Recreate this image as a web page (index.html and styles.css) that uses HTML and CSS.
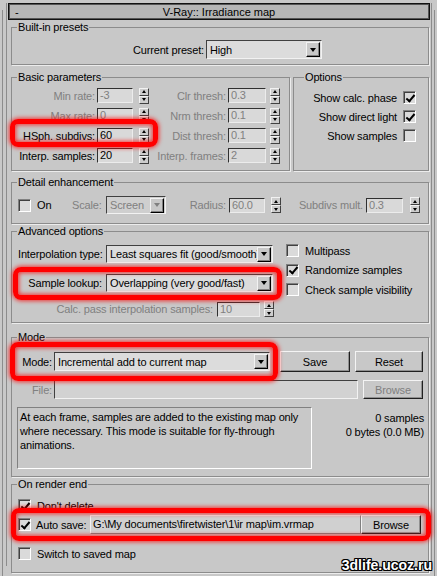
FILE: index.html
```html
<!DOCTYPE html>
<html lang="en">
<head>
    <meta charset="UTF-8">
    <meta name="viewport" content="width=device-width, initial-scale=1.0">
    <title>V-Ray:: Irradiance map</title>
    <link rel="stylesheet" href="styles.css">
</head>
<body>
<div class="rollout">
  <div class="inner">
    <div class="title"><span class="minus">-</span><span class="caption">V-Ray:: Irradiance map</span><span></span></div>

    <fieldset class="g presets">
      <legend>Built-in presets</legend>
      <div class="row">
        <span class="lbl preset-lbl">Current preset:</span>
        <div class="sel preset-sel"><span class="v">High</span><span class="arr"></span></div>
      </div>
    </fieldset>

    <div class="split">
      <fieldset class="g basic">
        <legend>Basic parameters</legend>
        <div class="prow">
          <span class="lbl l1 dis">Min rate:</span><span class="num n1 dis">-3</span><span class="spin s1"><i></i><i></i></span>
          <span class="lbl l2 dis">Clr thresh:</span><span class="num n2 dis">0.3</span><span class="spin s2"><i></i><i></i></span>
        </div>
        <div class="prow">
          <span class="lbl l1 dis">Max rate:</span><span class="num n1 dis">0</span><span class="spin s1"><i></i><i></i></span>
          <span class="lbl l2 dis">Nrm thresh:</span><span class="num n2 dis">0.1</span><span class="spin s2"><i></i><i></i></span>
        </div>
        <div class="prow">
          <span class="lbl l1">HSph. subdivs:</span><span class="num n1">60</span><span class="spin s1"><i></i><i></i></span>
          <span class="lbl l2 dis">Dist thresh:</span><span class="num n2 dis">0.1</span><span class="spin s2"><i></i><i></i></span>
        </div>
        <div class="prow">
          <span class="lbl l1">Interp. samples:</span><span class="num n1">20</span><span class="spin s1"><i></i><i></i></span>
          <span class="lbl l2 dis">Interp. frames:</span><span class="num n2 dis">2</span><span class="spin s2"><i></i><i></i></span>
        </div>
      </fieldset>

      <fieldset class="g options">
        <legend>Options</legend>
        <div class="opt"><span>Show calc. phase</span><span class="chk on"></span></div>
        <div class="opt"><span>Show direct light</span><span class="chk on"></span></div>
        <div class="opt"><span>Show samples</span><span class="chk"></span></div>
      </fieldset>
    </div>

    <fieldset class="g detail">
      <legend>Detail enhancement</legend>
      <div class="drow">
        <span class="chk"></span>
        <span class="d-on">On</span>
        <span class="d-scale dis">Scale:</span>
        <div class="sel dis d-sel"><span class="v">Screen</span><span class="arr"></span></div>
        <span class="lbl d-rad dis">Radius:</span>
        <span class="num d-n1 dis">60.0</span><span class="spin d-s1"><i></i><i></i></span>
        <span class="lbl d-sub dis">Subdivs mult.</span>
        <span class="num d-n2 dis">0.3</span><span class="spin d-s2"><i></i><i></i></span>
      </div>
    </fieldset>

    <fieldset class="g advanced">
      <legend>Advanced options</legend>
      <div class="adv">
        <div class="adv-left">
          <div class="arow arow1">
            <span class="lbl a-lbl">Interpolation type:</span>
            <div class="sel a-sel"><span class="v">Least squares fit (good/smooth)</span><span class="arr"></span></div>
          </div>
          <div class="arow arow2">
            <span class="lbl a-lbl">Sample lookup:</span>
            <div class="sel a-sel"><span class="v">Overlapping (very good/fast)</span><span class="arr"></span></div>
          </div>
          <div class="arow arow3">
            <span class="lbl calc-lbl dis">Calc. pass interpolation samples:</span>
            <span class="num calc-n dis">10</span><span class="spin calc-s"><i></i><i></i></span>
          </div>
        </div>
        <div class="adv-right">
          <div class="crow"><span class="chk"></span><span>Multipass</span></div>
          <div class="crow"><span class="chk on"></span><span>Randomize samples</span></div>
          <div class="crow"><span class="chk"></span><span>Check sample visibility</span></div>
        </div>
      </div>
    </fieldset>

    <fieldset class="g mode">
      <legend>Mode</legend>
      <div class="mrow">
        <span class="lbl m-lbl">Mode:</span>
        <div class="sel m-sel"><span class="v">Incremental add to current map</span><span class="arr"></span></div>
        <span class="btn save">Save</span>
        <span class="btn reset">Reset</span>
      </div>
      <div class="mrow frow">
        <span class="lbl m-lbl dis">File:</span>
        <span class="file"></span>
        <span class="btn browse dis">Browse</span>
      </div>
      <div class="mrow irow">
        <div class="info">At each frame, samples are added to the existing map only where necessary. This mode is suitable for fly-through animations.</div>
        <div class="stats">0 samples<br>0 bytes (0.0 MB)</div>
      </div>
    </fieldset>

    <fieldset class="g render-end">
      <legend>On render end</legend>
      <div class="rrow"><span class="chk on"></span><span class="r-txt">Don't delete</span></div>
      <div class="rrow autosave">
        <span class="chk on"></span><span class="as-lbl">Auto save:</span>
        <span class="path">G:\My documents\firetwister\1\ir map\im.vrmap</span>
        <span class="btn as-browse">Browse</span>
      </div>
      <div class="rrow switch"><span class="chk"></span><span class="r-txt">Switch to saved map</span></div>
    </fieldset>
  </div>
</div>

<div class="mark m-hsph"></div>
<div class="mark m-lookup"></div>
<div class="mark m-mode"></div>
<div class="mark m-save"></div>

<div class="wm">3dlife.ucoz.ru</div>
</body>
</html>
```

FILE: styles.css
```css
* {
    box-sizing: border-box;
}
body {
    margin: 0;
    height: 576px;
    overflow: hidden;
    position: relative;
    background-color: #c8c8c8;
    color: #000;
    font-family: "Liberation Sans", Arial, sans-serif;
    font-size: 11px;
    letter-spacing: -0.15px;
}
.dis { color: #808080; }

/* rollout frame */
.rollout {
    margin: 10px 2px 0;
    height: 566px;
    padding: 3px 2px 0 3px;
    border-left: 1px solid #8c8c8c;
    border-right: 1px solid #8c8c8c;
}
.inner {
    height: 100%;
    border-left: 1px solid #8c8c8c;
    border-right: 1px solid #8c8c8c;
}
.title {
    display: grid;
    grid-template-columns: 30px 1fr 30px;
    align-items: center;
    margin: -10px 1px 0;
    height: 17px;
    background-color: #b6b6b6;
    border: 1px solid #111;
    box-shadow: inset 1px 1px #555, inset -1px -1px #555;
}
.minus { padding-left: 6px; }
.caption { text-align: center; letter-spacing: 0; }

/* group boxes */
.g {
    margin: 1px 2px 0 4px;
    padding: 0 6px;
    min-width: 0;
    border: 1px solid #8c8c8c;
    box-shadow: 1px 1px #ececec;
}
.g legend {
    padding: 0 1px;
    margin-left: -1px;
    line-height: 13px;
}
.row, .prow, .drow, .arow, .mrow, .rrow, .opt, .crow {
    display: flex;
    align-items: center;
}
.lbl {
    white-space: nowrap;
    text-align: right;
    flex: none;
}

/* controls */
.sel {
    display: flex;
    align-items: center;
    height: 19px;
    padding-left: 3px;
    background-color: #dcdcdc;
    border: 1px solid;
    border-color: #404040 #f2f2f2 #f2f2f2 #404040;
    flex: none;
}
.sel .v {
    flex: 1;
    white-space: nowrap;
    overflow: hidden;
}
.sel .arr {
    display: flex;
    align-items: center;
    justify-content: center;
    width: 14px;
    height: 15px;
    margin-right: 1px;
    background-color: #c8c8c8;
    border: 1px solid;
    border-color: #f2f2f2 #000 #000 #f2f2f2;
    box-shadow: inset -1px -1px #808080;
    flex: none;
}
.sel .arr::after {
    content: "";
    border-left: 3.5px solid transparent;
    border-right: 3.5px solid transparent;
    border-top: 4px solid #000;
}
.sel.dis { background-color: #cfcfcf; }
.sel.dis .arr::after { border-top-color: #808080; }

.num {
    height: 15px;
    padding-left: 2px;
    line-height: 13px;
    background-color: #d9d9d9;
    border: 1px solid;
    border-color: #303030 #ececec #ececec #303030;
    flex: none;
}
.spin {
    display: flex;
    flex-direction: column;
    width: 10px;
    height: 16px;
    flex: none;
}
.spin i {
    flex: 1;
    display: flex;
    align-items: center;
    justify-content: center;
    background-color: #cdcdcd;
    border: 1px solid;
    border-color: #f2f2f2 #404040 #404040 #f2f2f2;
}
.spin i:first-child::after {
    content: "";
    border-left: 2.5px solid transparent;
    border-right: 2.5px solid transparent;
    border-bottom: 3px solid #000;
}
.spin i:last-child::after {
    content: "";
    border-left: 2.5px solid transparent;
    border-right: 2.5px solid transparent;
    border-top: 3px solid #000;
}
.chk {
    position: relative;
    width: 13px;
    height: 13px;
    flex: none;
    background-color: #dadada;
    border: 1px solid;
    border-color: #808080 #fff #fff #808080;
    box-shadow: inset 1px 1px #404040;
}
.chk.on::after {
    content: "";
    position: absolute;
    left: 3.5px;
    top: 0.5px;
    width: 3px;
    height: 7px;
    border: solid #000;
    border-width: 0 2px 2px 0;
    transform: rotate(40deg);
}
.btn {
    display: flex;
    align-items: center;
    justify-content: center;
    height: 21px;
    flex: none;
    background-color: #c8c8c8;
    border: 1px solid;
    border-color: #f4f4f4 #202020 #202020 #f4f4f4;
    box-shadow: inset -1px -1px #909090;
}

/* built-in presets */
.presets { padding-top: 6px; padding-bottom: 5px; }
.preset-lbl { width: 186px; margin-right: 2px; }
.preset-sel { width: 116px; }

/* basic parameters + options */
.split {
    display: flex;
    gap: 3px;
    margin: 6px 2px 0 4px;
}
.split .g { margin: 0; }
.basic {
    width: 279px;
    flex: none;
    padding-top: 4px;
    padding-bottom: 7px;
}
.prow {
    height: 15px;
    margin-bottom: 5px;
}
.prow:last-child { margin-bottom: 0; }
.l1 { width: 77px; margin-right: 2px; }
.n1 { width: 36px; }
.s1 { margin-left: 6px; }
.l2 { width: 77px; margin-right: 2px; }
.n2 { width: 38px; }
.s2 { margin-left: 4px; }

.options {
    flex: 1;
    padding: 7px 12px 0 6px;
}
.options legend { margin-left: 4px; }
.opt {
    justify-content: flex-end;
    gap: 6px;
    height: 13px;
    margin-bottom: 6px;
}

/* detail enhancement */
.detail {
    margin-top: 5px;
    padding-top: 7px;
    padding-bottom: 9px;
}
.drow { height: 18px; }
.d-on { width: 41px; padding-left: 6px; }
.d-scale { width: 34px; }
.d-sel { width: 60px; height: 18px; }
.d-rad { width: 63px; padding-right: 3px; }
.d-n1 { width: 36px; }
.d-s1 { margin-left: 6px; }
.d-sub { width: 85px; padding-right: 3px; }
.d-n2 { width: 37px; }
.d-s2 { margin-left: 7px; }

/* advanced options */
.advanced {
    margin-top: 1px;
    padding-top: 6px;
    padding-bottom: 5px;
}
.adv { display: flex; }
.adv-left { width: 268px; flex: none; }
.arow { height: 18px; }
.arow1 { margin-top: 1px; }
.arow2 { margin-top: 11px; }
.arow3 { margin-top: 9px; height: 16px; }
.a-lbl { width: 88px; padding-right: 4px; }
.a-sel { width: 167px; height: 18px; }
.calc-lbl { width: 199px; padding-right: 4px; }
.calc-n { width: 43px; }
.calc-s { margin-left: 4px; }
.crow {
    gap: 6px;
    height: 13px;
    margin-bottom: 6.5px;
}

/* mode */
.mode {
    margin-top: 8px;
    padding-top: 7px;
    padding-right: 4px;
    padding-bottom: 7px;
}
.mrow { height: 21px; }
.m-lbl { width: 34px; margin-right: 2px; }
.m-sel { width: 216px; }
.save { width: 70px; margin-left: 10px; }
.reset { width: 68px; margin-left: 5px; }
.frow { height: 19px; margin-top: 8px; }
.file {
    width: 304px;
    height: 19px;
    background-color: #d2d2d2;
    border: 1px solid;
    border-color: #404040 #f2f2f2 #f2f2f2 #404040;
}
.browse { width: 60px; height: 19px; margin-left: 5px; }
.irow {
    height: 62px;
    margin-top: 8px;
    align-items: stretch;
}
.info {
    width: 295px;
    margin-left: -1px;
    padding: 2px 2px;
    line-height: 14px;
    border: 1px solid;
    border-color: #808080 #fff #fff #808080;
}
.stats {
    flex: 1;
    padding-top: 4px;
    line-height: 14px;
    text-align: right;
}

/* on render end */
.render-end {
    margin-top: 1px;
    padding-top: 8px;
    padding-bottom: 12px;
}
.rrow { height: 13px; }
.r-txt { padding-left: 6px; }
.autosave { height: 19px; margin-top: 3px; }
.as-lbl { width: 59px; padding-left: 5px; white-space: nowrap; }
.path {
    width: 271px;
    height: 19px;
    padding-left: 2px;
    line-height: 17px;
    white-space: nowrap;
    overflow: hidden;
    background-color: #d0d0d0;
    border: 1px solid;
    border-color: #f0f0f0 #808080 #808080 #f0f0f0;
}
.as-browse { width: 60px; height: 19px; }
.switch { margin-top: 13px; }

/* red highlight marks drawn over the dialog */
.mark {
    position: absolute;
    border: 5px solid #ff0000;
    border-radius: 8px;
    box-shadow: 0 0 4px 1px rgba(255, 0, 0, 0.75), inset 0 0 4px 1px rgba(255, 0, 0, 0.75);
}
.m-hsph { left: 10px; top: 119px; width: 148px; height: 28px; }
.m-lookup { left: 13px; top: 267px; width: 269px; height: 33px; }
.m-mode { left: 10px; top: 342px; width: 268px; height: 39px; }
.m-save { left: 11px; top: 508px; width: 420px; height: 33px; }

.wm {
    position: absolute;
    right: 5px;
    bottom: 3px;
    color: #fff;
    font-weight: bold;
    font-size: 14px;
    letter-spacing: 0;
    text-shadow: 1px 0 #000, -1px 0 #000, 0 1px #000, 0 -1px #000,
                 1px 1px #000, -1px -1px #000, 1px -1px #000, -1px 1px #000;
}
```
